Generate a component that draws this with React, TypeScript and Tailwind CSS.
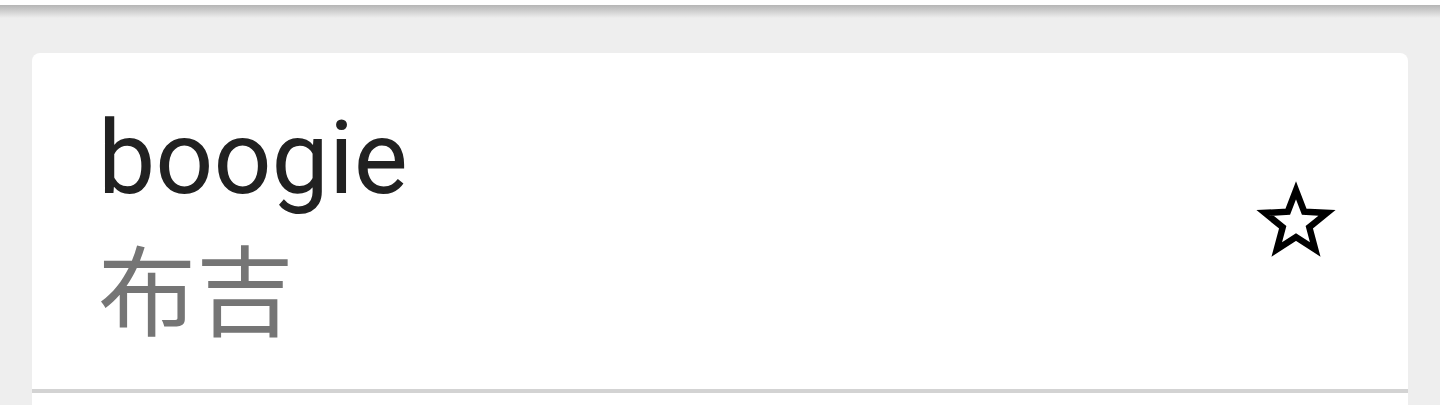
import React from "react";

export default function App() {
  return (
    <div className="w-[1440px] h-[405px] overflow-hidden bg-[#eeeeee] flex flex-col" style={{ fontFamily: "Roboto, 'Noto Sans CJK SC', sans-serif" }}>
      <div className="h-[5px] bg-white shrink-0" />
      <div className="h-[13px] shrink-0 bg-gradient-to-b from-[#b5b5b5] to-[#eeeeee]" />
      <div className="px-[32px] pt-[35px] flex-1">
        <div className="bg-white rounded-t-[8px] h-full flex flex-col">
          <div className="flex items-start pl-[66px] pr-[62px] h-[336px]">
            <div className="flex-1 flex flex-col pt-[45px]">
              <div className="text-[102px] leading-[120px] text-[#212121]">boogie</div>
              <div className="text-[98px] leading-[110px] text-[#757575] mt-[12px]" style={{ fontFamily: "'Noto Sans CJK SC', sans-serif" }}>布吉</div>
            </div>
            <svg width="100" height="100" viewBox="0 0 100 100" className="mt-[120px] shrink-0">
              <polygon
                points="50,17.4 58.2,38.7 81,39.9 63.3,54.3 69.2,76.4 50,64 30.8,76.4 36.7,54.3 19,39.9 41.8,38.7"
                fill="none"
                stroke="#000"
                strokeWidth="6.5"
                strokeLinejoin="miter"
                strokeMiterlimit={10}
              />
            </svg>
          </div>
          <div className="h-[4px] bg-[#d3d3d3]" />
        </div>
      </div>
    </div>
  );
}
